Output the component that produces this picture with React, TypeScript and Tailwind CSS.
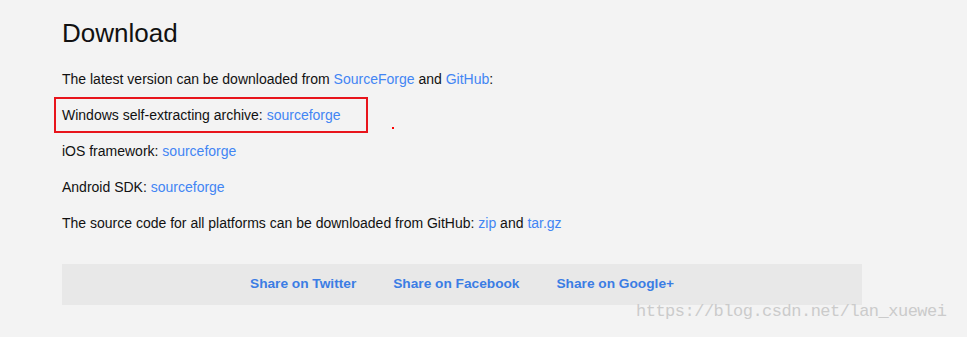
import React from 'react';

const Link: React.FC<{ children: React.ReactNode }> = ({ children }) => (
  <a href="#" className="text-[#4285f4] no-underline">{children}</a>
);

export default function App() {
  return (
    <div className="relative w-[967px] h-[337px] overflow-hidden bg-[#f3f3f3] font-['Liberation_Sans',Arial,sans-serif] text-[#111]">
      <div className="pl-[62px] w-[862px]">
        <h2 className="h-[61px] pt-[18px] text-[26px] leading-[30px] font-normal">Download</h2>

        <div className="text-[14px] leading-[16px]">
          <div className="h-[36px] flex items-center">
            <span>
              The latest version can be downloaded from <Link>SourceForge</Link> and <Link>GitHub</Link>:
            </span>
          </div>
          <div className="h-[36px] w-[314px] -ml-[8px] pl-[6px] flex items-center border-2 border-[#e8141b]">
            <span>
              Windows self-extracting archive: <Link>sourceforge</Link>
            </span>
          </div>
          <div className="h-[36px] flex items-center">
            <span>
              iOS framework: <Link>sourceforge</Link>
            </span>
          </div>
          <div className="h-[36px] flex items-center">
            <span>
              Android SDK: <Link>sourceforge</Link>
            </span>
          </div>
          <div className="h-[36px] flex items-center">
            <span>
              The source code for all platforms can be downloaded from GitHub: <Link>zip</Link> and <Link>tar.gz</Link>
            </span>
          </div>
        </div>

        <div className="mt-[23px] h-[41px] w-[800px] bg-[#e8e8e8] flex items-center justify-center gap-[37px] text-[13.7px] font-bold text-[#3b7de4]">
          <a href="#">Share on Twitter</a>
          <a href="#">Share on Facebook</a>
          <a href="#">Share on Google+</a>
        </div>
      </div>

      {/* stray red dot */}
      <div className="absolute left-[392px] top-[127px] w-[2px] h-[2px] bg-[#f00]" />

      {/* watermark */}
      <div className="absolute left-[636px] top-[302px] text-[17px] leading-[20px] tracking-[-0.5px] text-[#cbcbcb] font-['Liberation_Mono','DejaVu_Sans_Mono',monospace]">
        https://blog.csdn.net/lan_xuewei
      </div>
    </div>
  );
}
